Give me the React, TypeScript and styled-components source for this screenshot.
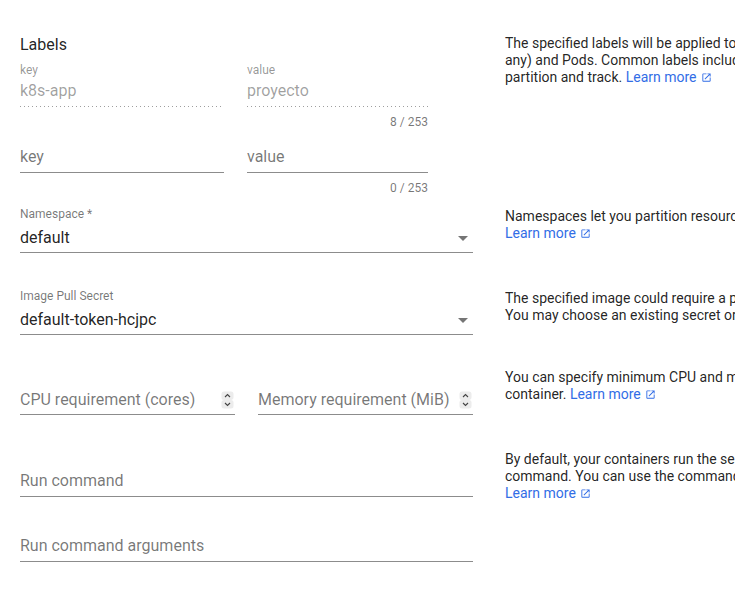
import React from 'react';
import styled, { createGlobalStyle } from 'styled-components';

const Global = createGlobalStyle`
  html, body { margin: 0; padding: 0; background: #fff; overflow: hidden; }
  body { font-family: Roboto, "Noto Sans", Arial, sans-serif; }
`;

const Page = styled.main`
  width: 1000px;
  padding: 35px 0 0 20px;
`;

const Section = styled.section<{ $top: number }>`
  display: grid;
  grid-template-columns: 453px 480px;
  column-gap: 32px;
  align-items: start;
  margin-top: ${(p) => p.$top}px;
`;

const Column = styled.div<{ $gap?: number }>`
  display: flex;
  flex-direction: column;
  gap: ${(p) => p.$gap ?? 0}px;
`;

const Heading = styled.h2`
  margin: 0 0 8px;
  font-size: 16px;
  line-height: 20px;
  font-weight: 400;
  color: rgba(0, 0, 0, 0.87);
`;

const Pair = styled.div<{ $cols: string }>`
  display: grid;
  grid-template-columns: ${(p) => p.$cols};
  column-gap: 23px;
  align-items: start;
`;

const Field = styled.div`
  display: flex;
  flex-direction: column;
  min-width: 0;
`;

const FloatLabel = styled.div<{ $gap: number; $tone: 'muted' | 'disabled' }>`
  height: 14px;
  font-size: 12px;
  line-height: 14px;
  margin-bottom: ${(p) => p.$gap}px;
  color: ${(p) => (p.$tone === 'disabled' ? 'rgba(0,0,0,0.42)' : 'rgba(0,0,0,0.54)')};
  white-space: nowrap;
`;

const Control = styled.div<{ $line: 'solid' | 'dotted'; $pad: number }>`
  display: flex;
  align-items: center;
  gap: 6px;
  height: 20px;
  padding-bottom: ${(p) => p.$pad}px;
  ${(p) =>
    p.$line === 'solid'
      ? 'border-bottom: 1px solid rgba(0,0,0,0.45);'
      : `border-bottom: 1px solid transparent;
         background-image: linear-gradient(to right, rgba(0,0,0,0.38) 0, rgba(0,0,0,0.38) 1px, transparent 1px);
         background-size: 4px 1px;
         background-repeat: repeat-x;
         background-position: 0 100%;
         background-origin: border-box;`}
`;

const Value = styled.span<{ $tone: 'value' | 'placeholder' | 'disabled' }>`
  flex: 1;
  min-width: 0;
  font-size: 16px;
  line-height: 20px;
  white-space: nowrap;
  overflow: hidden;
  color: ${(p) =>
    p.$tone === 'value' ? 'rgba(0,0,0,0.87)' : p.$tone === 'disabled' ? 'rgba(0,0,0,0.38)' : 'rgba(0,0,0,0.54)'};
`;

const Counter = styled.div`
  margin-top: 8px;
  font-size: 12px;
  line-height: 14px;
  text-align: right;
  color: rgba(0, 0, 0, 0.54);
`;

const Help = styled.p<{ $offset?: number }>`
  margin: ${(p) => p.$offset ?? 0}px 0 0;
  font-size: 14px;
  line-height: 16.8px;
  color: rgba(0, 0, 0, 0.87);
  white-space: nowrap;
`;

const Link = styled.a`
  color: #326de6;
  text-decoration: none;
  cursor: pointer;
`;

const LaunchIcon = styled.svg`
  width: 11px;
  height: 11px;
  margin-left: 4px;
  vertical-align: -1px;
  fill: #326de6;
`;

const Arrow = styled.svg`
  flex: none;
  width: 10px;
  height: 5px;
  margin-right: 5px;
  fill: rgba(0, 0, 0, 0.54);
`;

const Spinner = styled.svg`
  flex: none;
  width: 13px;
  height: 18px;
  margin-right: 1px;
`;

const LearnMore = () => (
  <Link>
    Learn more
    <LaunchIcon viewBox="0 0 24 24" aria-hidden="true">
      <path d="M19 19H5V5h7V3H5a2 2 0 0 0-2 2v14a2 2 0 0 0 2 2h14c1.1 0 2-.9 2-2v-7h-2v7zM14 3v2h3.59l-9.83 9.83 1.41 1.41L19 6.41V10h2V3h-7z" />
    </LaunchIcon>
  </Link>
);

const DropArrow = () => (
  <Arrow viewBox="0 0 10 5" aria-hidden="true">
    <path d="M0 0h10L5 5z" />
  </Arrow>
);

const SpinButtons = () => (
  <Spinner viewBox="0 0 13 18" aria-hidden="true">
    <path d="M3 0.5h7a2.5 2.5 0 0 1 2.5 2.5v3.5c0 1.4-1.1 2.5-2.5 2.5H3A2.5 2.5 0 0 1 0.5 6.5V3A2.5 2.5 0 0 1 3 0.5z" fill="#ececec" />
    <path d="M3 9h7a2.5 2.5 0 0 1 2.5 2.5V15a2.5 2.5 0 0 1-2.5 2.5H3A2.5 2.5 0 0 1 0.5 15v-3.5C0.5 10.1 1.6 9 3 9z" fill="#ececec" />
    <path d="M4 6l2.5-2.5L9 6" fill="none" stroke="#444" strokeWidth="1.1" />
    <path d="M4 12l2.5 2.5L9 12" fill="none" stroke="#444" strokeWidth="1.1" />
  </Spinner>
);

type SimpleProps = {
  label?: string;
  value: string;
  tone: 'value' | 'placeholder' | 'disabled';
  line?: 'solid' | 'dotted';
  labelGap?: number;
  pad?: number;
  labelTone?: 'muted' | 'disabled';
  trailing?: React.ReactNode;
  counter?: string;
};

const TextField = ({
  label,
  value,
  tone,
  line = 'solid',
  labelGap = 7,
  pad = 5,
  labelTone = 'muted',
  trailing,
  counter,
}: SimpleProps) => (
  <Field>
    <FloatLabel $gap={labelGap} $tone={labelTone}>
      {label}
    </FloatLabel>
    <Control $line={line} $pad={pad}>
      <Value $tone={tone}>{value}</Value>
      {trailing}
    </Control>
    {counter && <Counter>{counter}</Counter>}
  </Field>
);

export default function App() {
  return (
    <>
      <Global />
      <Page>
        <Section $top={0}>
          <Column>
            <Heading>Labels</Heading>
            <Pair $cols="204px 181px">
              <TextField label="key" value="k8s-app" tone="disabled" line="dotted" labelTone="disabled" labelGap={4} />
              <TextField label="value" value="proyecto" tone="disabled" line="dotted" labelTone="disabled" labelGap={4} counter="8 / 253" />
            </Pair>
            <Pair $cols="204px 181px">
              <TextField value="key" tone="placeholder" labelGap={4} />
              <TextField value="value" tone="placeholder" labelGap={4} counter="0 / 253" />
            </Pair>
          </Column>
          <Help>
            The specified labels will be applied to the created Deployment, Service (if
            <br />
            any) and Pods. Common labels include release, environment, tier,
            <br />
            partition and track. <LearnMore />
          </Help>
        </Section>

        <Section $top={12}>
          <TextField label="Namespace *" value="default" tone="value" pad={4} trailing={<DropArrow />} />
          <Help $offset={1}>
            Namespaces let you partition resources into logically named groups.
            <br />
            <LearnMore />
          </Help>
        </Section>

        <Section $top={36}>
          <TextField label="Image Pull Secret" value="default-token-hcjpc" tone="value" pad={4} trailing={<DropArrow />} />
          <Help $offset={1}>
            The specified image could require a pull secret credential if it is private.
            <br />
            You may choose an existing secret or create a new one.
          </Help>
        </Section>

        <Section $top={34}>
          <Pair $cols="215px 215px">
            <TextField value="CPU requirement (cores)" tone="placeholder" pad={4} trailing={<SpinButtons />} />
            <TextField value="Memory requirement (MiB)" tone="placeholder" pad={4} trailing={<SpinButtons />} />
          </Pair>
          <Help>
            You can specify minimum CPU and memory requirements for the
            <br />
            container. <LearnMore />
          </Help>
        </Section>

        <Section $top={35}>
          <Column $gap={18}>
            <TextField value="Run command" tone="placeholder" />
            <TextField value="Run command arguments" tone="placeholder" />
          </Column>
          <Help $offset={1}>
            By default, your containers run the selected image's default entrypoint
            <br />
            command. You can use the command options to override the default.
            <br />
            <LearnMore />
          </Help>
        </Section>
      </Page>
    </>
  );
}
